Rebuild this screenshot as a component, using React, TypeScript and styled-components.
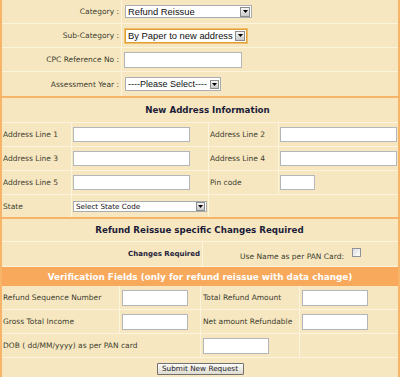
import React from "react";
import styled, { createGlobalStyle } from "styled-components";

const Global = createGlobalStyle`
  html, body { margin: 0; padding: 0; background: #f6e7c1; }
  * { box-sizing: border-box; }
`;

const CREAM = "#f6e7c1";
const LIGHT = "#fcf4dd";
const ORANGE = "#f8b468";
const LABEL = "#3d3d2e";

const Page = styled.div`
  width: 400px;
  height: 377px;
  overflow: hidden;
  background: ${CREAM};
  border-left: 2px solid ${ORANGE};
  border-right: 2px solid ${ORANGE};
  font-family: "DejaVu Sans", Verdana, sans-serif;
  font-size: 7.5px;
  color: ${LABEL};
`;

const Section = styled.div<{ cols: string; rows: string }>`
  display: grid;
  grid-template-columns: ${(p) => p.cols};
  grid-template-rows: ${(p) => p.rows};
  gap: 1px;
  background: ${LIGHT};
`;

const OrangeRule = styled.div`
  height: 2px;
  background: ${ORANGE};
`;

const Cell = styled.div<{ align?: "left" | "right" | "center"; span?: number; pad?: number }>`
  background: ${CREAM};
  display: flex;
  align-items: center;
  justify-content: ${(p) =>
    p.align === "right" ? "flex-end" : p.align === "center" ? "center" : "flex-start"};
  padding: 0 ${(p) => p.pad ?? 1}px;
  grid-column: ${(p) => (p.span ? `span ${p.span}` : "auto")};
  white-space: nowrap;
`;

const Heading = styled(Cell)<{ shift?: number }>`
  justify-content: center;
  padding-left: ${(p) => p.shift ?? 0}px;
  font-weight: bold;
  font-size: 8.7px;
  color: #1c1c38;
`;

const BoldLabel = styled.span`
  font-weight: bold;
  color: #1c1c38;
  font-size: 7px;
`;

const Bar = styled.div`
  height: 20px;
  background: #f9a95c;
  color: #fff;
  font-weight: bold;
  font-size: 8.85px;
  display: flex;
  align-items: center;
  justify-content: center;
  white-space: nowrap;
  border-top: 1px solid ${LIGHT};
`;

const TextInput = styled.div<{ w: number; h?: number }>`
  width: ${(p) => p.w}px;
  height: ${(p) => p.h ?? 15}px;
  background: #fff;
  border: 1px solid #b3b6ba;
`;

const SelectBox = styled.div<{ w: number; h: number; fs: number; focus?: boolean; font?: string }>`
  width: ${(p) => p.w}px;
  height: ${(p) => p.h}px;
  background: #fff;
  border: ${(p) => (p.focus ? "1px solid #e0a030" : "1px solid #a8adb3")};
  box-shadow: ${(p) => (p.focus ? "0 0 0 1px #f0c070" : "none")};
  display: flex;
  align-items: center;
  padding-left: 2px;
  font-family: ${(p) => p.font ?? '"Liberation Sans", Arial, sans-serif'};
  font-size: ${(p) => p.fs}px;
  color: #111;
`;

const SelectText = styled.span`
  flex: 1;
  overflow: hidden;
  white-space: nowrap;
`;

const ArrowBtn = styled.span<{ s: number }>`
  width: ${(p) => p.s}px;
  height: ${(p) => p.s}px;
  margin-right: 1px;
  border: 1px solid #8c8c8c;
  background: linear-gradient(#f6f6f6, #c9c9c9);
  display: flex;
  align-items: center;
  justify-content: center;
`;

const Arrow = () => (
  <svg width="5" height="3" viewBox="0 0 5 3">
    <path d="M0 0H5L2.5 3Z" fill="#000" />
  </svg>
);

const Select = ({
  w,
  h,
  fs,
  text,
  focus,
  btn,
  font,
}: {
  w: number;
  h: number;
  fs: number;
  text: string;
  focus?: boolean;
  btn: number;
  font?: string;
}) => (
  <SelectBox w={w} h={h} fs={fs} focus={focus} font={font}>
    <SelectText>{text}</SelectText>
    <ArrowBtn s={btn}>
      <Arrow />
    </ArrowBtn>
  </SelectBox>
);

const CheckGroup = styled.span`
  display: flex;
  align-items: flex-start;
  gap: 8px;
`;

const CheckText = styled.span`
  padding-top: 4px;
`;

const Checkbox = styled.span`
  width: 9px;
  height: 9px;
  border: 1px solid #8e9399;
  background: linear-gradient(135deg, #dcdcdc, #ffffff);
`;

const ButtonRow = styled.div`
  display: flex;
  justify-content: center;
  padding-top: 5px;
  border-top: 1px solid ${LIGHT};
`;

const SubmitButton = styled.button`
  width: 87px;
  height: 12px;
  padding: 0;
  border: 1px solid #707070;
  border-radius: 1px;
  background: linear-gradient(#fbfbf8, #dedbcf);
  font-family: "DejaVu Sans", Verdana, sans-serif;
  font-size: 7.3px;
  color: #1c1c28;
  line-height: 10px;
`;

export default function App() {
  return (
    <Page>
      <Global />
      <Section cols="119px 1fr" rows="23px 23px 23px 24px">
        <Cell align="right" pad={2}>Category :</Cell>
        <Cell pad={3}>
          <Select w={127} h={13} fs={9.4} text="Refund Reissue" btn={10} />
        </Cell>
        <Cell align="right" pad={2}>Sub-Category :</Cell>
        <Cell pad={3}>
          <Select w={122} h={14} fs={9.4} text="By Paper to new address" btn={10} focus />
        </Cell>
        <Cell align="right" pad={2}>CPC Reference No :</Cell>
        <Cell pad={2}>
          <TextInput w={118} h={16} />
        </Cell>
        <Cell align="right" pad={2}>Assessment Year :</Cell>
        <Cell pad={3}>
          <Select w={96} h={14} fs={9} text="----Please Select----" btn={9} />
        </Cell>
      </Section>
      <OrangeRule />
      <Section cols="69px 136px 69px 1fr" rows="24px 23px 23px 23px 22px">
        <Heading span={4} shift={16}>
          New Address Information
        </Heading>
        <Cell>Address Line 1</Cell>
        <Cell pad={1}>
          <TextInput w={117} />
        </Cell>
        <Cell>Address Line 2</Cell>
        <Cell>
          <TextInput w={117} />
        </Cell>
        <Cell>Address Line 3</Cell>
        <Cell>
          <TextInput w={117} />
        </Cell>
        <Cell>Address Line 4</Cell>
        <Cell>
          <TextInput w={117} />
        </Cell>
        <Cell>Address Line 5</Cell>
        <Cell>
          <TextInput w={117} />
        </Cell>
        <Cell>Pin code</Cell>
        <Cell>
          <TextInput w={35} />
        </Cell>
        <Cell>State</Cell>
        <Cell>
          <Select
            w={134}
            h={11}
            fs={7.2}
            text="Select State Code"
            btn={9}
            font='"DejaVu Sans", Verdana, sans-serif'
          />
        </Cell>
        <Cell span={2} />
      </Section>
      <OrangeRule />
      <Section cols="200px 1fr" rows="22px 24px">
        <Heading span={2}>Refund Reissue specific Changes Required</Heading>
        <Cell align="right" pad={2}>
          <BoldLabel>Changes Required</BoldLabel>
        </Cell>
        <Cell align="center">
          <CheckGroup>
            <CheckText>Use Name as per PAN Card:</CheckText>
            <Checkbox />
          </CheckGroup>
        </Cell>
      </Section>
      <Bar>Verification Fields (only for refund reissue with data change)</Bar>
      <Section cols="117px 80px 98px 1fr" rows="23px 23px 23px">
        <Cell>Refund Sequence Number</Cell>
        <Cell pad={2}>
          <TextInput w={66} h={16} />
        </Cell>
        <Cell pad={2}>Total Refund Amount</Cell>
        <Cell pad={2}>
          <TextInput w={66} h={16} />
        </Cell>
        <Cell>Gross Total Income</Cell>
        <Cell pad={2}>
          <TextInput w={66} h={16} />
        </Cell>
        <Cell pad={2}>Net amount Refundable</Cell>
        <Cell pad={2}>
          <TextInput w={66} h={16} />
        </Cell>
        <Cell span={2}>DOB ( dd/MM/yyyy) as per PAN card</Cell>
        <Cell pad={2}>
          <TextInput w={66} h={16} />
        </Cell>
        <Cell />
      </Section>
      <ButtonRow>
        <SubmitButton>Submit New Request</SubmitButton>
      </ButtonRow>
    </Page>
  );
}
